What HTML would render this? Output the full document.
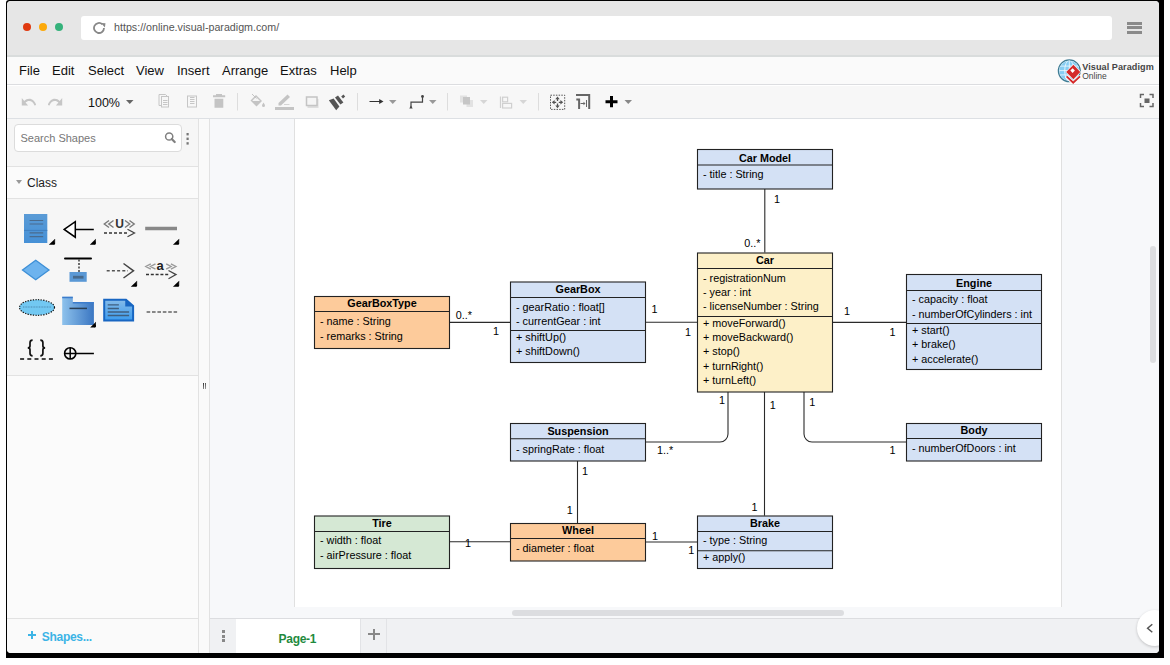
<!DOCTYPE html>
<html><head><meta charset="utf-8">
<style>
*{box-sizing:border-box}
html,body{margin:0;padding:0}
body{width:1170px;height:665px;position:relative;overflow:hidden;background:#fff;font-family:"Liberation Sans",sans-serif;}
.a{position:absolute}
#shadow{left:6px;top:0;width:1158px;height:658px;background:#000;border-top-left-radius:3px}
#win{left:0;top:0;width:1170px;height:665px;clip-path:inset(1px 11px 12px 7px round 4px);background:#f7f8fa}
.menu span{position:absolute;top:64px;font-size:13px;color:#111;line-height:14px}
.cls{position:absolute;border:1px solid #3a3a3a;font-size:11px;color:#111}
.cls .t{position:absolute;left:0;right:0;text-align:center;font-weight:bold}
.cls .r{position:absolute;left:6px;white-space:nowrap}
.cls .d{position:absolute;left:0;right:0;height:1px;background:#3a3a3a}
svg text{font-family:"Liberation Sans",sans-serif;font-size:10.8px;fill:#000}
</style></head>
<body>
<div id="shadow" class="a"></div>
<div id="win" class="a">
  <!-- chrome bar -->
  <div class="a" style="left:0;top:0;width:1170px;height:56px;background:#e6e6e6"></div>
  <div class="a" style="left:0;top:55px;width:1170px;height:2px;background:#d9dcdc"></div>
  <div class="a" style="left:23px;top:23px;width:8px;height:8px;border-radius:50%;background:#e0390f"></div>
  <div class="a" style="left:39px;top:23px;width:8px;height:8px;border-radius:50%;background:#fca90a"></div>
  <div class="a" style="left:55px;top:23px;width:8px;height:8px;border-radius:50%;background:#35b27b"></div>
  <div class="a" style="left:81px;top:16px;width:1031px;height:24px;border-radius:3px;background:#fff"></div>
  <svg class="a" style="left:93px;top:22px" width="14" height="12" viewBox="0 0 14 12"><path d="M11 6a5 5 0 1 1-1.6-3.7" fill="none" stroke="#888" stroke-width="1.8"/><path d="M8 1l4.5 0.2-0.6 4.2z" fill="#888"/></svg>
  <div class="a" style="left:114px;top:21px;font-size:10.7px;color:#555;line-height:12px">https://online.visual-paradigm.com/</div>
  <div class="a" style="left:1127px;top:22px;width:15px;height:3px;background:#8a8a8a"></div>
  <div class="a" style="left:1127px;top:26px;width:15px;height:3px;background:#8a8a8a"></div>
  <div class="a" style="left:1127px;top:31px;width:15px;height:3px;background:#8a8a8a"></div>

  <!-- menu bar -->
  <div class="a" style="left:0;top:57px;width:1170px;height:27px;background:#fafafa"></div>
  <div class="a" style="left:0;top:84px;width:1170px;height:1px;background:#dcdde0"></div>
  <div class="menu">
    <span style="left:19px">File</span><span style="left:52px">Edit</span><span style="left:88px">Select</span><span style="left:136px">View</span><span style="left:177px">Insert</span><span style="left:222px">Arrange</span><span style="left:280px">Extras</span><span style="left:330px">Help</span>
  </div>

  <svg class="a" style="left:1055px;top:57px" width="104" height="27" viewBox="1055 57 104 27">
    <defs><clipPath id="gclip"><circle cx="1069.3" cy="70.8" r="10"/></clipPath></defs>
    <circle cx="1069.3" cy="70.8" r="10.9" fill="#fff" stroke="#3f7d95" stroke-width="1.3"/>
    <circle cx="1069.3" cy="70.8" r="10" fill="#86cdf3"/>
    <g clip-path="url(#gclip)" fill="none" stroke="#f4fbff" stroke-width="0.8">
      <ellipse cx="1069.3" cy="70.8" rx="4.6" ry="10.5"/>
      <path d="M1069.3 60v22M1058 66.1h23M1058 70.6h23M1058 74.9h23"/>
    </g>
    <path d="M1066.3 76.3L1073.2 83L1080.3 76.3" fill="none" stroke="#fff" stroke-width="3.6"/>
    <path d="M1066.6 76.4L1073.2 82.6L1080 76.4" fill="none" stroke="#d42a2a" stroke-width="1.9"/>
    <path d="M1065.5 72L1073.4 64L1081 72L1073.4 80Z" fill="#fff"/>
    <path d="M1066.2 72L1073.4 64.8L1080.3 72L1073.4 79.2Z" fill="#d42a2a"/>
    <path d="M1070.3 70.6L1072.6 68.3L1074.9 70.6L1072.6 72.9Z" fill="#fff"/>
    <text x="1082.2" y="69.7" style="font-size:9.1px;font-weight:bold;fill:#444;letter-spacing:0.07px">Visual Paradigm</text>
    <text x="1082.2" y="78.6" style="font-size:8.5px;fill:#444">Online</text>
  </svg>
  <!-- toolbar -->
  <div class="a" style="left:0;top:85px;width:1170px;height:33px;background:#f7f7f7;border-top:1px solid #fff"></div>
  <div class="a" style="left:0;top:118px;width:1170px;height:1px;background:#dde0e4"></div>
  <div class="a" style="left:88px;top:96px;font-size:12.5px;color:#111;line-height:14px">100%</div>
  <svg class="a" style="left:0;top:85px" width="1170" height="33" viewBox="0 85 1170 33">
    <!-- undo/redo -->
    <path transform="translate(20.4 92) scale(0.7 0.85)" d="M12.5 8c-2.65 0-5.05.99-6.9 2.6L2 7v9h9l-3.62-3.62c1.39-1.16 3.16-1.88 5.12-1.88 3.54 0 6.55 2.31 7.6 5.5l2.37-.78C21.08 11.03 17.15 8 12.5 8z" fill="#c6c6c6"/>
    <path transform="translate(63.6 92) scale(-0.7 0.85)" d="M12.5 8c-2.65 0-5.05.99-6.9 2.6L2 7v9h9l-3.62-3.62c1.39-1.16 3.16-1.88 5.12-1.88 3.54 0 6.55 2.31 7.6 5.5l2.37-.78C21.08 11.03 17.15 8 12.5 8z" fill="#c6c6c6"/>
    <path d="M126 100h7.5l-3.75 4z" fill="#666"/>
    <!-- copy -->
    <g fill="none" stroke="#c6c6c6" stroke-width="1">
      <path d="M161.5 105.5h-2.5v-11h6.5l1.5 1.5"/>
      <rect x="161.5" y="96.5" width="7" height="10.5"/>
      <path d="M163 100.5h4.5M163 102.5h4.5M163 104.5h4.5"/>
      <rect x="187.5" y="96" width="9" height="11"/>
      <path d="M190 97.5h4.5M190 99.5h4.5M190 101.5h4.5M190 103.5h4.5"/>
    </g>
    <path d="M213 95.2h12.2v2h-12.2zM216 94h6v1.5h-6zM214.5 98.8h8.8v9h-8.8z" fill="#c4c4c4"/>
    <path d="M237.5 93v17.5M357.5 93v17.5M447.5 93v17.5M538.5 93v17.5" stroke="#dddddd" stroke-width="1"/>
    <!-- fill bucket -->
    <path d="M250.5 100.5l5.5-5.5 6 6-5.5 5.5z" fill="#c4c4c4"/>
    <path d="M252.5 100.5l3.5-3.5 4 4h-7.5z" fill="#f5f5f5"/>
    <path d="M252 94l4.5 4.5" stroke="#c4c4c4" stroke-width="1"/>
    <path d="M263.5 102.5c-.8 1.3-1.5 2.2-1.5 3a1.5 1.5 0 0 0 3 0c0-.8-.7-1.7-1.5-3z" fill="#c4c4c4"/>
    <!-- line color -->
    <path d="M278.5 103l9-8.5 2.5 2.5-9 8.5h-2.5z" fill="#c4c4c4"/>
    <rect x="275" y="107" width="19" height="3" fill="#c4c4c4"/>
    <path d="M284 104.5h5.5" stroke="#d4d4d4" stroke-width="1"/>
    <!-- shadow -->
    <rect x="307.5" y="99" width="11" height="9" fill="#dedede"/>
    <rect x="306.5" y="97" width="10.5" height="8.5" fill="#f5f5f5" stroke="#c4c4c4" stroke-width="1.5"/>
    <!-- brush -->
    <path d="M328.8 100.2L333.6 98.6L339.4 106.6L336.2 110.2Z" fill="#555"/>
    <path d="M335 97.6L338 95.4L343.4 102.6L340.4 104.6Z" fill="#555"/>
    <path d="M341.2 96.4L343.4 94.4L345.2 96.4L343 98.4Z" fill="#555"/>
    <!-- arrow -->
    <path d="M369.5 101.5h12" stroke="#333" stroke-width="1.1"/>
    <path d="M379.2 99l4.3 2.5-4.3 2.5z" fill="#333"/>
    <path d="M389 100h7.5l-3.75 4z" fill="#999"/>
    <!-- connector -->
    <path d="M411 107v-4.8h11.5v-5.5" fill="none" stroke="#444" stroke-width="1.2"/>
    <circle cx="422.5" cy="96.5" r="1.4" fill="#444"/>
    <path d="M409.3 108.6l1.7-3 1.7 3z" fill="#444"/>
    <path d="M429 100h7.5l-3.75 4z" fill="#999"/>
    <!-- to front -->
    <rect x="460" y="95.5" width="7" height="7" fill="#e2e2e2"/>
    <rect x="466.5" y="100" width="6.5" height="7" fill="#e2e2e2"/>
    <rect x="463" y="97" width="7" height="7.5" fill="#c6c6c6"/>
    <path d="M480 100h7.5l-3.75 4z" fill="#d6d6d6"/>
    <!-- align -->
    <g fill="none" stroke="#d0d0d0" stroke-width="1.2">
      <path d="M500.5 96.5v11.5"/>
      <rect x="502.6" y="97.2" width="5" height="4.6"/>
      <rect x="502.6" y="103.4" width="9" height="4.6"/>
    </g>
    <path d="M519.5 100h7.5l-3.75 4z" fill="#d6d6d6"/>
    <!-- fit -->
    <rect x="550.5" y="95.2" width="14.2" height="14.2" fill="none" stroke="#555" stroke-width="1" stroke-dasharray="1.5 1.2"/>
    <g stroke="#555" stroke-width="1.3" fill="none"><path d="M557.5 98.5V101M557.5 103.6V106.1M553.7 102.3H556.2M558.8 102.3H561.3"/></g>
    <g fill="#555"><path d="M555.3 99.2L557.5 96.4L559.7 99.2ZM555.3 105.4L557.5 108.2L559.7 105.4ZM554.6 100.1L551.8 102.3L554.6 104.5ZM560.4 100.1L563.2 102.3L560.4 104.5Z"/></g>
    <!-- page size -->
    <path d="M576 95h13.2v14" fill="none" stroke="#666" stroke-width="2"/>
    <path d="M576.3 98.6h3.8v10.4h-2v-8.4h-1.8z" fill="#666"/>
    <path d="M580.5 103.5h4" stroke="#666" stroke-width="1"/>
    <path d="M583.5 101.8l2 1.7-2 1.7z" fill="#666"/>
    <path d="M586.5 100v7" stroke="#666" stroke-width="1"/>
    <!-- plus -->
    <path d="M605.5 100.2h12v3h-12zM610 96h3v11.2h-3z" fill="#000"/>
    <path d="M624.5 100h7.5l-3.75 4z" fill="#888"/>
    <!-- fullscreen -->
    <path d="M1140.5 98v-3.5h3.5M1149.5 94.5h3.5v3.5M1153 103v3.5h-3.5M1144 106.5h-3.5v-3.5" fill="none" stroke="#666" stroke-width="1.5"/>
    <rect x="1144.5" y="98.5" width="5" height="4.5" fill="#666"/>
  </svg>


  <!-- sidebar -->
  <div class="a" style="left:0;top:119px;width:198px;height:47px;background:#f6f6f6"></div>
  <div class="a" style="left:0;top:166px;width:198px;height:1px;background:#e2e2e2"></div>
  <div class="a" style="left:0;top:167px;width:198px;height:31px;background:#fbfbfb"></div>
  <div class="a" style="left:0;top:198px;width:198px;height:1px;background:#e2e2e2"></div>
  <div class="a" style="left:0;top:199px;width:198px;height:176px;background:#f6f6f6"></div>
  <div class="a" style="left:0;top:375px;width:198px;height:1px;background:#e2e2e2"></div>
  <div class="a" style="left:0;top:376px;width:198px;height:242px;background:#fbfbfb"></div>
  <div class="a" style="left:0;top:618px;width:198px;height:1px;background:#e2e2e2"></div>
  <div class="a" style="left:0;top:619px;width:198px;height:40px;background:#fafafa"></div>
  <div class="a" style="left:198px;top:119px;width:1px;height:540px;background:#e2e2e2"></div>
  <div class="a" style="left:199px;top:119px;width:10px;height:540px;background:#fafafa"></div>
  <div class="a" style="left:209px;top:119px;width:1px;height:540px;background:#e2e2e2"></div>

  <div class="a" style="left:14px;top:124px;width:168px;height:28px;border:1px solid #dcdcdc;border-radius:4px;background:#fff"></div>
  <div class="a" style="left:20.5px;top:132px;font-size:11px;color:#777;line-height:12px">Search Shapes</div>
  <svg class="a" style="left:160px;top:128px" width="34" height="20" viewBox="160 128 34 20">
    <circle cx="169.2" cy="136.5" r="3.6" fill="none" stroke="#808080" stroke-width="1.5"/>
    <path d="M171.7 139L174.7 142" stroke="#808080" stroke-width="2.2" stroke-linecap="round"/>
    <rect x="186.5" y="133" width="2.2" height="2.4" fill="#777"/>
    <rect x="186.5" y="137.6" width="2.2" height="2.4" fill="#777"/>
    <rect x="186.5" y="142.2" width="2.2" height="2.4" fill="#777"/>
  </svg>
  <svg class="a" style="left:0;top:199px" width="198" height="178" viewBox="0 199 198 178">
    <defs>
      <linearGradient id="gfold" x1="0" y1="0" x2="1" y2="0"><stop offset="0" stop-color="#8ec2ec"/><stop offset="1" stop-color="#3a76c2"/></linearGradient>
      <linearGradient id="gnote" x1="0" y1="0" x2="0" y2="1"><stop offset="0" stop-color="#86bbe8"/><stop offset="1" stop-color="#3c9cef"/></linearGradient>
      <linearGradient id="gcls" x1="0" y1="0" x2="0" y2="1"><stop offset="0" stop-color="#5a9bd6"/><stop offset="1" stop-color="#4690d6"/></linearGradient>
    </defs>
    <!-- class -->
    <rect x="24" y="214" width="23.3" height="29" fill="url(#gcls)"/>
    <path d="M24 230.4h23.3" stroke="#3f7fc0" stroke-width="1"/>
    <path d="M29.6 220.5h13.6M29.6 224h13.6M29.6 232.9h13.6M29.6 236.6h13.6" stroke="#4a6b8e" stroke-width="1.2"/>
    <path d="M55.1 238.8L55.1 243.8Q55.1 244.8 53.6 244.8Z" fill="#000"/><path d="M55.1 238.8L54.1 244.8L48.8 244.8Z" fill="#000"/>
    <!-- generalization -->
    <path d="M64.2 229.4L75.3 221.6V237.2Z" fill="#fff" stroke="#000" stroke-width="1.5" stroke-linejoin="miter"/>
    <path d="M75.3 229.4H93.8" stroke="#000" stroke-width="1.5"/>
    <path d="M95.9 238.8L95.9 243.8Q95.9 244.8 94.4 244.8Z" fill="#000"/><path d="M95.9 238.8L94.9 244.8L89.8 244.8Z" fill="#000"/>
    <!-- <<U>> -->
    <path d="M109.0 220.5L104.3 224.0L109.0 227.5 M113.5 220.5L108.8 224.0L113.5 227.5" fill="none" stroke="#7a7a7a" stroke-width="1.4"/>
    <text x="115.3" y="228.3" style="font-size:12px;fill:#333;font-weight:bold">U</text>
    <path d="M125.0 220.5L129.7 224.0L125.0 227.5 M129.5 220.5L134.2 224.0L129.5 227.5" fill="none" stroke="#7a7a7a" stroke-width="1.4"/>
    <path d="M104 233h24" stroke="#333" stroke-width="1.5" stroke-dasharray="3 2"/>
    <path d="M127.5 229.2L134.5 233L127.5 236.8" fill="none" stroke="#444" stroke-width="1.3"/>
    <!-- line -->
    <path d="M145.2 228.5H177" stroke="#888" stroke-width="3.5"/>
    <path d="M179.2 238.8L179.2 243.8Q179.2 244.8 177.7 244.8Z" fill="#000"/><path d="M179.2 238.8L178.2 244.8L172.9 244.8Z" fill="#000"/>
    <!-- diamond -->
    <path d="M35.7 260.2L49 270L35.7 279.7L22.5 270Z" fill="#6db3ee" stroke="#3d8fd6" stroke-width="1.3"/>
    <!-- constraint -->
    <path d="M65 258.4H91" stroke="#000" stroke-width="2" stroke-linecap="round"/>
    <path d="M79 259.5V272" stroke="#222" stroke-width="1.3" stroke-dasharray="2 1.5"/>
    <rect x="69.5" y="272" width="17.2" height="9.8" fill="#5a98d5"/>
    <rect x="73" y="275.8" width="10.5" height="2.8" fill="#47698c"/>
    <!-- dashed arrow -->
    <path d="M106.7 270.8H128" stroke="#555" stroke-width="1.5" stroke-dasharray="3 2.2"/>
    <path d="M123.5 263.5L133.5 270.8L123.5 278" fill="none" stroke="#444" stroke-width="1.5"/>
    <path d="M137.1 280.7L137.1 285.7Q137.1 286.7 135.6 286.7Z" fill="#000"/><path d="M137.1 280.7L136.1 286.7L130.8 286.7Z" fill="#000"/>
    <!-- <<a>> -->
    <path d="M150.8 263.8L145.8 266.5L150.8 269.2 M155.5 263.8L150.5 266.5L155.5 269.2" fill="none" stroke="#999" stroke-width="1.4"/>
    <text x="156.6" y="269.6" style="font-size:13px;fill:#222;font-weight:bold">a</text>
    <path d="M166.2 263.8L171.1 266.5L166.2 269.2 M170.9 263.8L175.9 266.5L170.9 269.2" fill="none" stroke="#999" stroke-width="1.4"/>
    <path d="M146 274.6h24" stroke="#333" stroke-width="1.5" stroke-dasharray="3 1.8"/>
    <path d="M168.5 270.5L176 274.6L168.5 278.7" fill="none" stroke="#444" stroke-width="1.3"/>
    <path d="M179.2 280.7L179.2 285.7Q179.2 286.7 177.7 286.7Z" fill="#000"/><path d="M179.2 280.7L178.2 286.7L172.9 286.7Z" fill="#000"/>
    <!-- ellipse -->
    <ellipse cx="37" cy="307.5" rx="17.5" ry="7.8" fill="#72c8f2" stroke="#111" stroke-width="1.2" stroke-dasharray="1.3 1.3"/>
    <path d="M23 307h28" stroke="#5aa0c8" stroke-width="1.5" stroke-dasharray="1 0.6"/>
    <!-- folder -->
    <path d="M62.2 296.7h10.6v5.5h21.1v22.9h-31.7z" fill="url(#gfold)"/>
    <path d="M62.2 297.5h10.6M72.8 302.7h21.1" stroke="#3c7ccc" stroke-width="1.5"/>
    <path d="M69.5 308.4H87" stroke="#2a3f55" stroke-width="1.5"/>
    <path d="M96.0 321.8L96.0 326.6Q96.0 327.6 94.5 327.6Z" fill="#000"/><path d="M96.0 321.8L95.0 327.6L90.2 327.6Z" fill="#000"/>
    <!-- note -->
    <path d="M104.2 299.7H126L133.1 306V320.4H104.2Z" fill="url(#gnote)" stroke="#1866c2" stroke-width="2"/>
    <path d="M126 299.7V305.8H133" fill="#1866c2" stroke="#1866c2" stroke-width="1.5"/>
    <path d="M107.7 304.8h11.2M107.7 308.5h11.2M107.7 312h21.4M107.7 315.5h21.4" stroke="#3f5f80" stroke-width="1.3"/>
    <!-- dashed line -->
    <path d="M146.6 312H177.1" stroke="#888" stroke-width="2" stroke-dasharray="3.6 1.8"/>
    <!-- {} -->
    <path d="M32.6 340.2Q30 340.2 30 342.8V346Q30 347.8 27.8 347.9Q30 348 30 349.8V353.3Q30 355.8 32.6 355.8" fill="none" stroke="#111" stroke-width="1.7"/>
    <path d="M40.3 340.2Q42.9 340.2 42.9 342.8V346Q42.9 347.8 45.1 347.9Q42.9 348 42.9 349.8V353.3Q42.9 355.8 40.3 355.8" fill="none" stroke="#111" stroke-width="1.7"/>
    <path d="M20.1 358.9H53" stroke="#444" stroke-width="2" stroke-dasharray="4 3.2"/>
    <!-- interface circle -->
    <circle cx="70.2" cy="353.4" r="5.6" fill="none" stroke="#000" stroke-width="1.6"/>
    <path d="M64.6 353.4H93.9M70.2 347.8V359" stroke="#000" stroke-width="1.5"/>
  </svg>

  <div class="a" style="left:15.9px;top:180px;width:0;height:0;border-left:3.5px solid transparent;border-right:3.5px solid transparent;border-top:4.2px solid #999"></div>
  <div class="a" style="left:27px;top:177px;font-size:12px;color:#222;line-height:13px">Class</div>
  <div class="a" style="left:27.5px;top:633.8px;width:8.6px;height:2.4px;background:#3cb4e6"></div>
  <div class="a" style="left:30.6px;top:630.9px;width:2.4px;height:8.2px;background:#3cb4e6"></div>
  <div class="a" style="left:41.8px;top:631px;font-size:12px;color:#3cb4e6;font-weight:bold;line-height:13px;letter-spacing:-0.3px">Shapes...</div>

  <!-- canvas page -->
  <div class="a" style="left:294px;top:119px;width:768px;height:488px;background:#fff;border-left:1px solid #e0e0e0;border-right:1px solid #e0e0e0"></div>
  <div class="a" style="left:512px;top:610px;width:332px;height:6px;border-radius:3px;background:#dcdde0"></div>
  <div class="a" style="left:1150px;top:246px;width:6px;height:117px;border-radius:3px;background:#dcdde0"></div>

  <!-- tab bar -->
  <div class="a" style="left:210px;top:618px;width:960px;height:1px;background:#dcdde0"></div>
  <div class="a" style="left:210px;top:619px;width:960px;height:40px;background:#f0f1f3"></div>
  <div class="a" style="left:236px;top:619px;width:124px;height:40px;background:#fff"></div>
  <div class="a" style="left:278.6px;top:633px;font-size:12px;color:#1f8a3e;font-weight:bold;line-height:13px;letter-spacing:-0.3px">Page-1</div>
  <div class="a" style="left:360px;top:619px;width:1px;height:40px;background:#e2e3e6"></div>
  <div class="a" style="left:386px;top:619px;width:1px;height:40px;background:#e2e3e6"></div>
  <div class="a" style="left:367.5px;top:633.2px;width:12.2px;height:2.2px;background:#888"></div>
  <div class="a" style="left:372.5px;top:628.8px;width:2.2px;height:10.9px;background:#888"></div>
  <div class="a" style="left:222.2px;top:630.4px;width:3px;height:3px;background:#888"></div>
  <div class="a" style="left:222.2px;top:634.9px;width:3px;height:3px;background:#888"></div>
  <div class="a" style="left:222.2px;top:639.3px;width:3px;height:3px;background:#888"></div>
  <div class="a" style="left:203px;top:383px;width:1px;height:6px;background:linear-gradient(#333,#888)"></div>
  <div class="a" style="left:205px;top:383px;width:1px;height:6px;background:linear-gradient(#555,#999)"></div>
  <div class="a" style="left:1137px;top:610px;width:36px;height:36px;border-radius:50%;background:#fff;box-shadow:0 1px 3px rgba(0,0,0,.2)"></div>
  <svg class="a" style="left:1140px;top:618px" width="20" height="20" viewBox="1140 618 20 20"><path d="M1152.3 624.2L1147.6 628.2L1152.3 632.2" fill="none" stroke="#555" stroke-width="1.5"/></svg>

  <!-- diagram -->
  <!--DIAGRAM--><svg class="a" style="left:0;top:0" width="1170" height="665" viewBox="0 0 1170 665">
<g fill="none" stroke="#2a2a2a" stroke-width="1.1">
<path d="M764.8 189V252.5"/>
<path d="M449.5 322.4H510"/>
<path d="M645.5 322.2H697"/>
<path d="M832 322.4H906"/>
<path d="M728 391.5V434a8 8 0 0 1 -8 8H645.5"/>
<path d="M764.5 391.5V515.7"/>
<path d="M804 391.5V434a8 8 0 0 0 8 8H906"/>
<path d="M577.5 460.8V523.1"/>
<path d="M449.5 541.7H510"/>
<path d="M645.5 542H697.2"/>
</g>
<rect x="697.5" y="149.5" width="135.0" height="39.5" fill="#d4e1f5" stroke="#222" stroke-width="1.1"/>
<path d="M697.5 165.0H832.5" stroke="#222" stroke-width="1.1"/>
<text x="765.0" y="161.6" text-anchor="middle" font-weight="bold">Car Model</text>
<text x="703.0" y="178.4">- title : String</text>
<rect x="697.5" y="253.0" width="135.0" height="139.0" fill="#fdf0c8" stroke="#222" stroke-width="1.1"/>
<path d="M697.5 268.5H832.5" stroke="#222" stroke-width="1.1"/>
<path d="M697.5 316.5H832.5" stroke="#222" stroke-width="1.1"/>
<text x="765.0" y="264.2" text-anchor="middle" font-weight="bold">Car</text>
<text x="703.0" y="282.1">- registrationNum</text>
<text x="703.0" y="296.3">- year : int</text>
<text x="703.0" y="310.3">- licenseNumber : String</text>
<text x="703.0" y="327.1">+ moveForward()</text>
<text x="703.0" y="341.1">+ moveBackward()</text>
<text x="703.0" y="355.1">+ stop()</text>
<text x="703.0" y="370.3">+ turnRight()</text>
<text x="703.0" y="384.3">+ turnLeft()</text>
<rect x="314.5" y="296.5" width="135.0" height="52.0" fill="#fdcb9b" stroke="#222" stroke-width="1.1"/>
<path d="M314.5 311.5H449.5" stroke="#222" stroke-width="1.1"/>
<text x="382.0" y="307.2" text-anchor="middle" font-weight="bold">GearBoxType</text>
<text x="320.0" y="325.4">- name : String</text>
<text x="320.0" y="339.5">- remarks : String</text>
<rect x="510.5" y="282.0" width="135.0" height="80.5" fill="#d4e1f5" stroke="#222" stroke-width="1.1"/>
<path d="M510.5 297.5H645.5" stroke="#222" stroke-width="1.1"/>
<path d="M510.5 330.5H645.5" stroke="#222" stroke-width="1.1"/>
<text x="578.0" y="293.2" text-anchor="middle" font-weight="bold">GearBox</text>
<text x="516.0" y="310.7">- gearRatio : float[]</text>
<text x="516.0" y="325.2">- currentGear : int</text>
<text x="516.0" y="340.9">+ shiftUp()</text>
<text x="516.0" y="355.1">+ shiftDown()</text>
<rect x="906.5" y="274.5" width="135.0" height="95.0" fill="#d4e1f5" stroke="#222" stroke-width="1.1"/>
<path d="M906.5 290.5H1041.5" stroke="#222" stroke-width="1.1"/>
<path d="M906.5 323.5H1041.5" stroke="#222" stroke-width="1.1"/>
<text x="974.0" y="286.5" text-anchor="middle" font-weight="bold">Engine</text>
<text x="912.0" y="303.4">- capacity : float</text>
<text x="912.0" y="317.9">- numberOfCylinders : int</text>
<text x="912.0" y="334.2">+ start()</text>
<text x="912.0" y="348.0">+ brake()</text>
<text x="912.0" y="362.7">+ accelerate()</text>
<rect x="510.5" y="423.5" width="135.0" height="37.5" fill="#d4e1f5" stroke="#222" stroke-width="1.1"/>
<path d="M510.5 438.8H645.5" stroke="#222" stroke-width="1.1"/>
<text x="578.0" y="434.8" text-anchor="middle" font-weight="bold">Suspension</text>
<text x="516.0" y="452.6">- springRate : float</text>
<rect x="906.5" y="423.5" width="135.0" height="37.5" fill="#d4e1f5" stroke="#222" stroke-width="1.1"/>
<path d="M906.5 438.5H1041.5" stroke="#222" stroke-width="1.1"/>
<text x="974.0" y="434.0" text-anchor="middle" font-weight="bold">Body</text>
<text x="912.0" y="451.9">- numberOfDoors : int</text>
<rect x="314.5" y="516.0" width="135.0" height="52.5" fill="#d5e8d4" stroke="#222" stroke-width="1.1"/>
<path d="M314.5 531.5H449.5" stroke="#222" stroke-width="1.1"/>
<text x="382.0" y="527.3" text-anchor="middle" font-weight="bold">Tire</text>
<text x="320.0" y="544.3">- width : float</text>
<text x="320.0" y="558.9">- airPressure : float</text>
<rect x="510.5" y="523.5" width="135.0" height="37.5" fill="#fdcb9b" stroke="#222" stroke-width="1.1"/>
<path d="M510.5 538.5H645.5" stroke="#222" stroke-width="1.1"/>
<text x="578.0" y="534.1" text-anchor="middle" font-weight="bold">Wheel</text>
<text x="516.0" y="552.3">- diameter : float</text>
<rect x="697.5" y="516.0" width="135.0" height="52.5" fill="#d4e1f5" stroke="#222" stroke-width="1.1"/>
<path d="M697.5 531.5H832.5" stroke="#222" stroke-width="1.1"/>
<path d="M697.5 550.8H832.5" stroke="#222" stroke-width="1.1"/>
<text x="765.0" y="527.0" text-anchor="middle" font-weight="bold">Brake</text>
<text x="703.0" y="543.9">- type : String</text>
<text x="703.0" y="561.3">+ apply()</text>
<text x="774.1" y="203.3">1</text>
<text x="744.3" y="247.3">0..*</text>
<text x="455.7" y="318.5">0..*</text>
<text x="493.1" y="334.5">1</text>
<text x="651.4" y="313.2">1</text>
<text x="684.9" y="336.3">1</text>
<text x="844.1" y="315.1">1</text>
<text x="889.4" y="336.2">1</text>
<text x="719.1" y="403.9">1</text>
<text x="769.8" y="408.7">1</text>
<text x="809.3" y="406.3">1</text>
<text x="656.9" y="454.3">1..*</text>
<text x="889.4" y="454.4">1</text>
<text x="582.1" y="475.2">1</text>
<text x="566.7" y="514.2">1</text>
<text x="464.9" y="547.1">1</text>
<text x="652.1" y="540.1">1</text>
<text x="688.2" y="554.2">1</text>
<text x="751.4" y="511.3">1</text>
</svg><!--/DIAGRAM-->
</div>
</body></html>
